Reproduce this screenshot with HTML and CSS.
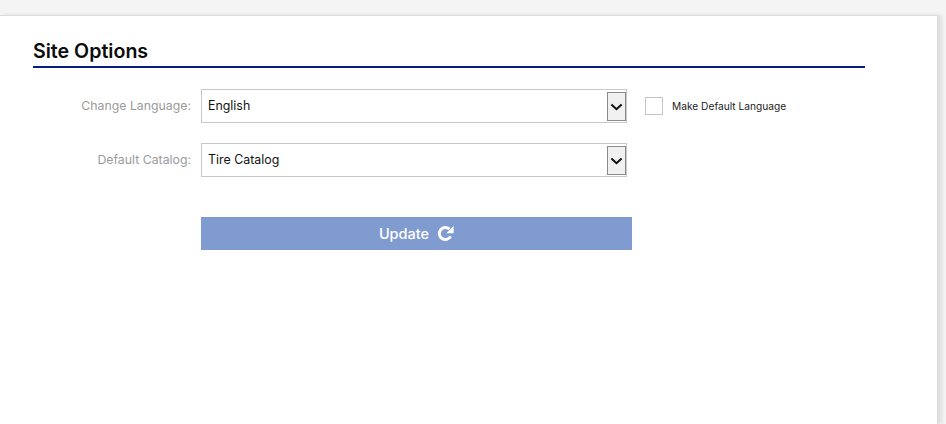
FILE: index.html
```html
<!DOCTYPE html>
<html lang="en">
<head>
    <meta charset="UTF-8">
    <meta name="viewport" content="width=device-width, initial-scale=1.0">
    <title>Site Options</title>
    <link rel="stylesheet" href="styles.css">
</head>
<body>
    <div class="card">
        <h1>Site Options</h1>
        <form class="options">
            <div class="row">
                <label class="row-label" for="languageSelect">Change Language:</label>
                <div class="select-wrap">
                    <select id="languageSelect"><option>English</option></select>
                    <span class="select-arrow">
                        <svg width="13" height="8" viewBox="0 0 13 8"><path d="M1.4 1.4 6.5 6.2 11.6 1.4" fill="none" stroke="#111" stroke-width="2"/></svg>
                    </span>
                </div>
                <label class="default-check">
                    <span class="checkbox"></span>
                    Make Default Language
                </label>
            </div>
            <div class="row">
                <label class="row-label" for="catalogSelect">Default Catalog:</label>
                <div class="select-wrap">
                    <select id="catalogSelect"><option>Tire Catalog</option></select>
                    <span class="select-arrow">
                        <svg width="13" height="8" viewBox="0 0 13 8"><path d="M1.4 1.4 6.5 6.2 11.6 1.4" fill="none" stroke="#111" stroke-width="2"/></svg>
                    </span>
                </div>
            </div>
            <button type="button" class="update-btn">
                Update
                <svg width="17" height="17" viewBox="0 0 17 17"><path d="M13.6 11.4A6 6 0 1 1 12.4 4.2" fill="none" stroke="#fff" stroke-width="3"/><path d="M16.6 1V8.2H9.4Z" fill="#fff"/></svg>
            </button>
        </form>
    </div>
</body>
</html>
```

FILE: styles.css
```css
html, body {
    height: 100%;
}
body {
    font-family: Inter, 'Noto Sans', Arial, sans-serif;
    background: #f4f4f4;
    margin: 0;
    padding: 15px 8px 0 0;
    box-sizing: border-box;
    overflow: hidden;
    color: #222;
}
.card {
    height: 100%;
    box-sizing: border-box;
    background: #fff;
    border-top: 1px solid #dcdcdc;
    border-right: 1px solid #dcdcdc;
    box-shadow: 4px 0 4px rgba(0,0,0,0.09);
    padding: 24px 72px 0 33px;
}
h1 {
    margin: 0 0 21px 0;
    padding-bottom: 3px;
    height: 23px;
    line-height: 23px;
    font-size: 19.6px;
    font-weight: 600;
    color: #0b0b0b;
    border-bottom: 2px solid #0a1a86;
}
.row {
    display: flex;
    align-items: center;
    margin-bottom: 20px;
}
.row-label {
    width: 158px;
    margin-right: 10px;
    padding-bottom: 1px;
    text-align: right;
    font-size: 12.3px;
    color: #9b9b9b;
}
.select-wrap {
    position: relative;
    width: 426px;
    height: 34px;
}
.select-wrap select {
    width: 100%;
    height: 100%;
    appearance: none;
    background: #fff;
    border: 1px solid #c8c8c8;
    border-radius: 0;
    padding: 0 0 2px 6px;
    font-family: inherit;
    font-size: 12.4px;
    color: #111;
}
.select-arrow {
    position: absolute;
    top: 3px;
    right: 1px;
    width: 17px;
    height: 27px;
    display: flex;
    align-items: center;
    justify-content: center;
    background: #f0f0f0;
    border: 1px solid #8a8a8a;
}
.default-check {
    display: flex;
    align-items: center;
    margin-left: 18px;
    font-size: 10.2px;
    color: #222;
}
.checkbox {
    width: 16px;
    height: 16px;
    margin-right: 9px;
    background: #fff;
    border: 1px solid #c4c4c4;
}
.update-btn {
    display: flex;
    align-items: center;
    justify-content: center;
    gap: 8px;
    width: 431px;
    height: 33px;
    margin: 40px 0 0 168px;
    border: none;
    background: #7f9bd0;
    color: #fff;
    font-family: inherit;
    font-size: 14.5px;
    font-weight: 500;
}
```
